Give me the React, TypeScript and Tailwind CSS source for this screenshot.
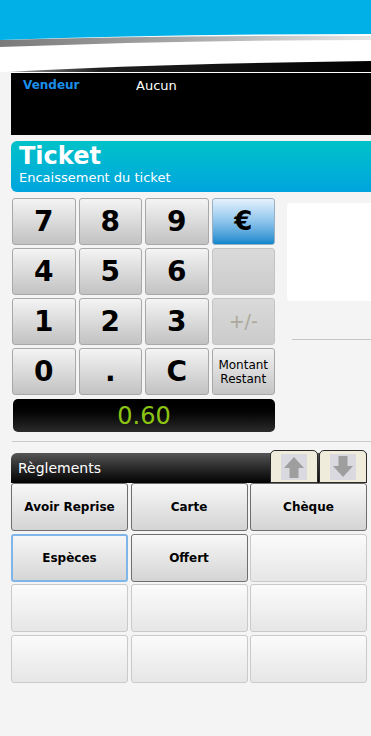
import React from 'react';

const font = { fontFamily: '"DejaVu Sans", Verdana, sans-serif' };

function Swoosh() {
  return (
    <svg width="371" height="72" viewBox="0 0 371 72" className="block">
      <defs>
        <linearGradient id="shadow" x1="0" y1="0" x2="1" y2="0">
          <stop offset="0" stopColor="#7a7a7a" />
          <stop offset="0.5" stopColor="#a8a8a8" />
          <stop offset="1" stopColor="#e6e6e6" />
        </linearGradient>
        <linearGradient id="dark" x1="0" y1="0" x2="1" y2="0">
          <stop offset="0" stopColor="#9a9a9a" />
          <stop offset="0.25" stopColor="#202020" />
          <stop offset="1" stopColor="#000000" />
        </linearGradient>
      </defs>
      <rect width="371" height="72" fill="#ffffff" />
      <path d="M0 40 Q180 35 371 36 L371 40 Q180 40 0 47 Z" fill="url(#shadow)" />
      <path d="M0 0 H371 V34 Q180 34 0 40 Z" fill="#00b0e6" />
      <path d="M8 72 Q150 64 371 61 V72 Z" fill="url(#dark)" />
    </svg>
  );
}

function Arrow({ down }: { down?: boolean }) {
  return (
    <svg width="26" height="26" viewBox="0 0 26 26">
      <rect width="26" height="26" fill="#d9d9df" />
      <g transform={down ? 'rotate(180 13 13)' : undefined}>
        <path d="M3 14 L13 3 L23 14 L17.5 14 L17.5 24 L8.5 24 L8.5 14 Z" fill="#9e9e9e" />
      </g>
    </svg>
  );
}

const keys = [
  { label: '7' }, { label: '8' }, { label: '9' }, { label: '€', kind: 'euro' },
  { label: '4' }, { label: '5' }, { label: '6' }, { label: '', kind: 'off' },
  { label: '1' }, { label: '2' }, { label: '3' }, { label: '+/-', kind: 'off' },
  { label: '0' }, { label: '.' }, { label: 'C' }, { label: 'Montant Restant', kind: 'small' },
];

const payments = ['Avoir Reprise', 'Carte', 'Chèque', 'Espèces', 'Offert', '', '', '', '', '', '', ''];

function Key({ label, kind }: { label: string; kind?: string }) {
  if (kind === 'euro') {
    return (
      <div className="flex items-center justify-center rounded-[3px] border border-[#9cb0c4] bg-gradient-to-b from-[#e6f2fc] via-[#8cc4ec] to-[#0288cc] text-[26px] font-bold text-black">
        {label}
      </div>
    );
  }
  if (kind === 'off') {
    return (
      <div className="flex items-center justify-center rounded-[3px] border border-[#c4c4c4] bg-gradient-to-b from-[#dadada] to-[#cbcbcb] text-[19px] text-[#aca89c]">
        {label}
      </div>
    );
  }
  if (kind === 'small') {
    return (
      <div className="flex items-center justify-center rounded-[3px] border border-[#a8a8a8] bg-gradient-to-b from-[#f2f2f2] to-[#c4c4c4] text-center text-[12px] leading-[14px] text-black">
        Montant<br />Restant
      </div>
    );
  }
  return (
    <div className="flex items-center justify-center rounded-[3px] border border-[#a8a8a8] bg-gradient-to-b from-[#f4f4f4] to-[#c2c2c2] text-[28px] font-bold text-black">
      {label}
    </div>
  );
}

export default function App() {
  return (
    <div className="min-h-[736px] w-[371px] bg-[#f4f4f4]" style={font}>
      <Swoosh />

      {/* Vendeur panel */}
      <div className="ml-[11px] h-[63px] border-t border-white bg-black">
        <div className="flex pt-[3px] text-[12px]">
          <span className="ml-[12px] w-[113px] font-bold text-[#1a8fea]">Vendeur</span>
          <span className="text-[13px] text-white">Aucun</span>
        </div>
      </div>

      {/* Ticket banner */}
      <div className="ml-[11px] mt-[6px] h-[51px] rounded-l-[6px] bg-gradient-to-b from-[#00c2c8] to-[#00a4de] pl-[8px] text-white">
        <div className="pt-[1px] text-[24px] font-bold leading-[28px]">Ticket</div>
        <div className="text-[13px] leading-[16px]">Encaissement du ticket</div>
      </div>

      {/* Keypad + side panel */}
      <div className="mt-[6px] flex">
        <div className="ml-[12px] w-[263px]">
          <div className="grid grid-cols-4 grid-rows-[repeat(4,47px)] gap-[3px]">
            {keys.map((k, i) => (
              <Key key={i} label={k.label} kind={k.kind} />
            ))}
          </div>
          <div className="ml-[1px] mt-[4px] flex h-[33px] items-center justify-center rounded-[5px] bg-gradient-to-b from-[#000000] to-[#2c2c2c] text-[24px] text-[#8cc414]">
            0.60
          </div>
        </div>
        <div className="ml-[12px] flex-1 pt-[5px]">
          <div className="h-[98px] rounded-l-[4px] bg-white" />
          <div className="ml-[5px] mt-[38px] h-px bg-[#c4c4c4]" />
        </div>
      </div>

      <div className="ml-[12px] mt-[9px] h-px bg-[#cacaca]" />

      {/* Règlements */}
      <div className="ml-[11px] mt-[11px] w-[356px]">
        <div className="relative flex h-[30px] items-center rounded-tl-[6px] bg-gradient-to-b from-[#565656] to-[#050505] pl-[7px] text-[14px] text-white">
          Règlements
          <div className="absolute bottom-0 right-0 flex gap-[1px]">
            <div className="flex h-[33px] w-[48px] items-center justify-center rounded-t-[5px] border border-[#2a2a2a] bg-[#f0ecdc]">
              <Arrow />
            </div>
            <div className="flex h-[33px] w-[48px] items-center justify-center rounded-t-[5px] border border-[#2a2a2a] bg-[#f0ecdc]">
              <Arrow down />
            </div>
          </div>
        </div>
        <div className="grid grid-cols-3 grid-rows-[repeat(4,48px)] gap-[2.5px]">
          {payments.map((p, i) => {
            const selected = p === 'Espèces';
            const empty = p === '';
            return (
              <div
                key={i}
                className={
                  selected
                    ? 'flex items-center justify-center rounded-[3px] border-2 border-[#7fb6ea] bg-gradient-to-b from-[#f6f6f6] to-[#d6d6d6] text-[12px] font-bold text-black'
                    : empty
                    ? 'rounded-[3px] border border-[#cacaca] bg-gradient-to-b from-[#fbfbfb] to-[#e6e6e6]'
                    : 'flex items-center justify-center rounded-[3px] border border-[#6e6e6e] bg-gradient-to-b from-[#f8f8f8] to-[#d4d4d4] text-[12px] font-bold text-black'
                }
              >
                {p}
              </div>
            );
          })}
        </div>
      </div>
    </div>
  );
}
